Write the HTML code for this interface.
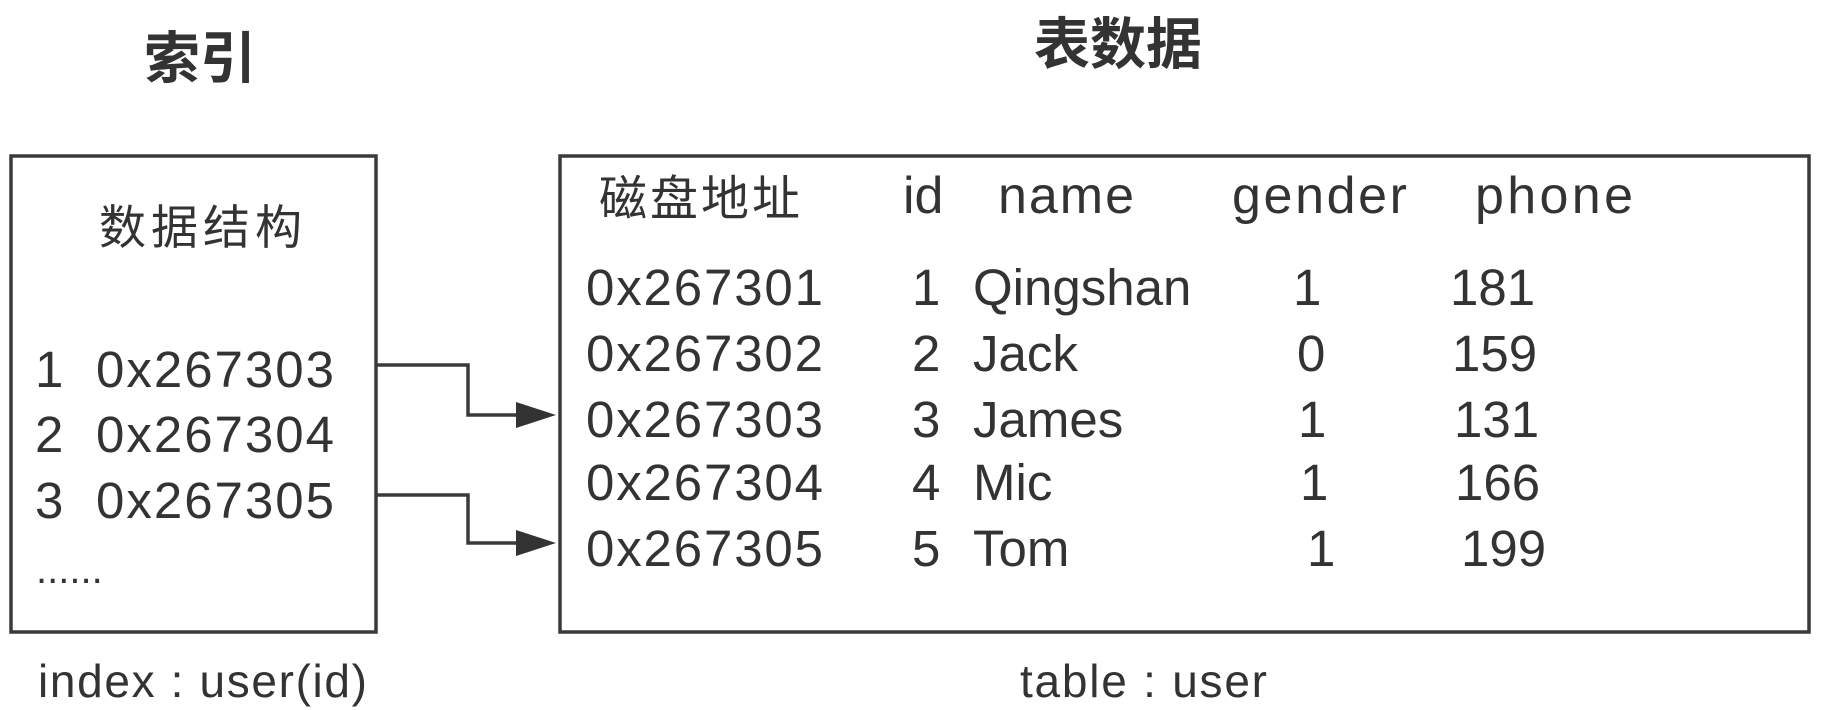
<!DOCTYPE html>
<html><head><meta charset="utf-8"><style>
html,body{margin:0;padding:0;background:#fff;width:1824px;height:710px;overflow:hidden}
svg{display:block}
text{font-family:"Liberation Sans","Noto Sans CJK SC",sans-serif;fill:#333}
</style></head><body>
<svg width="1824" height="710" viewBox="0 0 1824 710">
<g stroke="#3a3a3a" stroke-width="3.5" fill="none">
<rect x="11" y="156" width="365" height="476"/>
<rect x="560" y="156" width="1249" height="476"/>
<polyline points="376,365 468,365 468,415 520,415"/>
<polyline points="376,495 468,495 468,543 520,543"/>
</g>
<polygon points="516,402 556,415 516,428" fill="#333"/>
<polygon points="516,530 556,543 516,556" fill="#333"/>
<text x="144" y="78" font-size="56" font-weight="bold" style="font-family:'Noto Sans CJK SC',sans-serif">索引</text>
<text x="1034" y="64" font-size="56" font-weight="bold" style="font-family:'Noto Sans CJK SC',sans-serif">表数据</text>
<text x="99" y="244" font-size="47" letter-spacing="5" style="font-family:'Noto Sans CJK SC',sans-serif">数据结构</text>
<g font-size="51">
<text x="35" y="387">1</text><text x="96" y="387" textLength="238">0x267303</text>
<text x="35" y="452">2</text><text x="96" y="452" textLength="238">0x267304</text>
<text x="35" y="518">3</text><text x="96" y="518" textLength="238">0x267305</text>
<text x="36" y="583" font-size="40">......</text>
</g>
<text x="38" y="697" font-size="46" textLength="329">index : user(id)</text>
<text x="1020" y="697" font-size="46" textLength="247">table : user</text>
<text x="599" y="215" font-size="48" letter-spacing="3" style="font-family:'Noto Sans CJK SC',sans-serif">磁盘地址</text>
<g font-size="52">
<text x="903" y="213">id</text>
<text x="998" y="213" textLength="136">name</text>
<text x="1232" y="213" textLength="175">gender</text>
<text x="1475" y="213" textLength="158">phone</text>
</g>
<g font-size="51">
<text x="586" y="305" textLength="237">0x267301</text>
<text x="586" y="371" textLength="237">0x267302</text>
<text x="586" y="437" textLength="237">0x267303</text>
<text x="586" y="500" textLength="237">0x267304</text>
<text x="586" y="566" textLength="237">0x267305</text>
<text x="912" y="305">1</text><text x="973" y="305">Qingshan</text><text x="1293" y="305">1</text><text x="1450" y="305">181</text>
<text x="912" y="371">2</text><text x="973" y="371">Jack</text><text x="1297" y="371">0</text><text x="1452" y="371">159</text>
<text x="912" y="437">3</text><text x="973" y="437">James</text><text x="1298" y="437">1</text><text x="1454" y="437">131</text>
<text x="912" y="500">4</text><text x="973" y="500">Mic</text><text x="1300" y="500">1</text><text x="1455" y="500">166</text>
<text x="912" y="566">5</text><text x="973" y="566">Tom</text><text x="1307" y="566">1</text><text x="1461" y="566">199</text>
</g>
</svg>
</body></html>
